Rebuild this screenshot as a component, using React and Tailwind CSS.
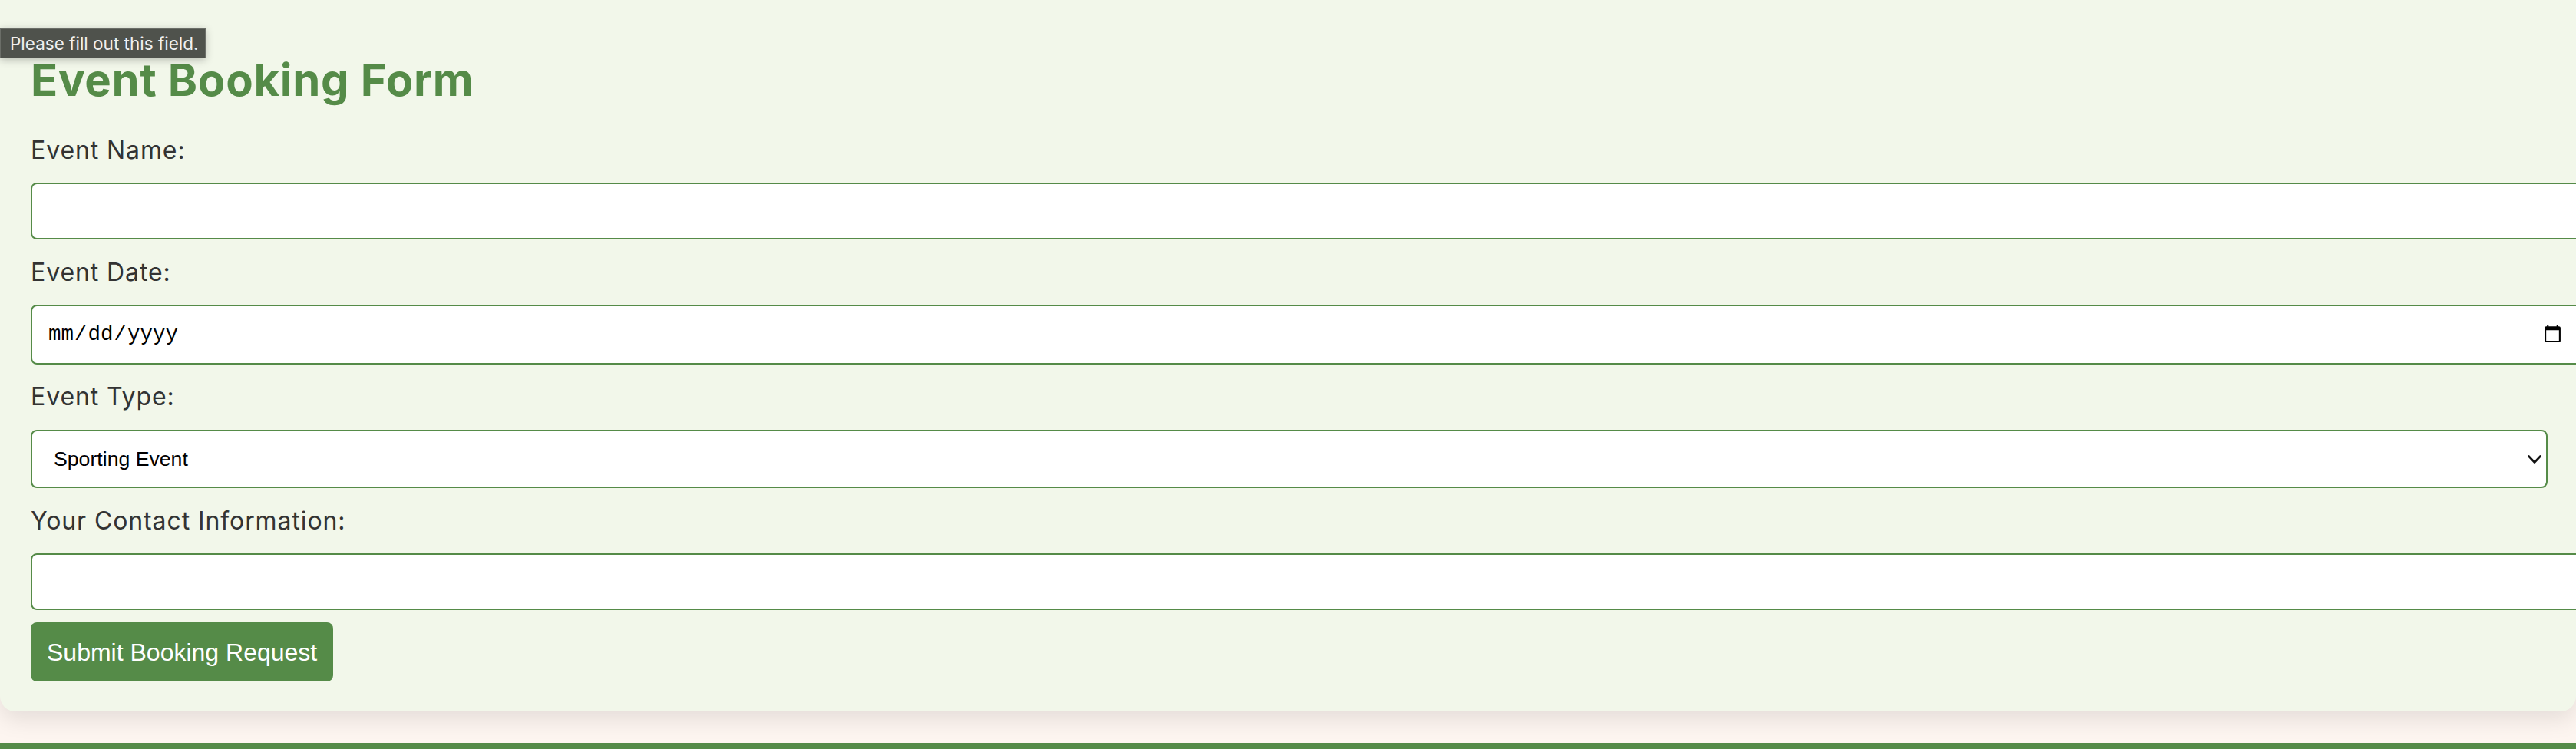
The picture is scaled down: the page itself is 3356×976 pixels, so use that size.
import React from "react";

export default function App() {
  return (
    <div className="relative w-full h-[976px] overflow-hidden bg-[#fdf5f0] font-['Inter',sans-serif]">
      <div className="w-full bg-[#f2f7ea] rounded-b-[20px] shadow-[0_10px_30px_rgba(0,0,0,0.1)] pl-[40px] pr-[37px] pt-[69px] pb-[39px]">
        <h2 className="text-[58px] leading-[70px] font-bold tracking-[0.7px] text-[#558b48] mb-[35px]">Event Booking Form</h2>
        <form onSubmit={(e) => e.preventDefault()}>
          <label className="block text-[32px] leading-[44px] tracking-[0.9px] text-[#333333] mb-[20px]">Event Name:</label>
          <input
            type="text"
            className="block box-content w-full h-[30px] py-[20px] px-[20px] border-2 border-[#558b48] rounded-[8px] bg-white text-[26.67px] font-['Liberation_Sans',Arial,sans-serif] mb-[21px] outline-none"
          />
          <label className="block text-[32px] leading-[44px] tracking-[0.9px] text-[#333333] mb-[20px]">Event Date:</label>
          <input
            type="date"
            className="block box-content w-full h-[34px] py-[20px] px-[20px] border-2 border-[#558b48] rounded-[8px] bg-white text-[27.5px] text-black font-['Liberation_Mono',monospace] mb-[20px] outline-none"
          />
          <label className="block text-[32px] leading-[44px] tracking-[0.9px] text-[#333333] mb-[21px]">Event Type:</label>
          <div className="relative mb-[21px]">
            <select
              defaultValue="sport"
              className="block w-full h-[76px] appearance-none pl-[28px] pr-[60px] border-2 border-[#558b48] rounded-[8px] bg-white text-[26.67px] text-black font-['Liberation_Sans',Arial,sans-serif] outline-none"
            >
              <option value="concert">Concert</option>
              <option value="sport">Sporting Event</option>
              <option value="conference">Conference</option>
            </select>
            <svg
              className="absolute right-[8px] top-[33px] pointer-events-none"
              width="18"
              height="12"
              viewBox="0 0 18 12"
              fill="none"
            >
              <path d="M1.5 1.5 L9 9.5 L16.5 1.5" stroke="#111" strokeWidth="2.6" strokeLinecap="round" strokeLinejoin="round" />
            </svg>
          </div>
          <label className="block text-[32px] leading-[44px] tracking-[0.9px] text-[#333333] mb-[20px]">Your Contact Information:</label>
          <input
            type="text"
            className="block box-content w-full h-[30px] py-[20px] px-[20px] border-2 border-[#558b48] rounded-[8px] bg-white text-[26.67px] font-['Liberation_Sans',Arial,sans-serif] mb-[16px] outline-none"
          />
          <button
            type="submit"
            className="block h-[77px] px-[21px] rounded-[8px] bg-[#558b48] text-white text-[32px] font-['Liberation_Sans',Arial,sans-serif]"
          >
            Submit Booking Request
          </button>
        </form>
      </div>
      <div className="mt-[41px] h-[8px] bg-[#558b48]" />
      <div className="absolute left-0 top-[37px] w-[268px] h-[39px] flex items-center pl-[12px] bg-[#4f524c] border border-[#6b6e68] shadow-[0_2px_10px_rgba(0,0,0,0.25)] text-[22.5px] text-[#f0f0f0] font-['Inter',sans-serif]">
        Please fill out this field.
      </div>
    </div>
  );
}
